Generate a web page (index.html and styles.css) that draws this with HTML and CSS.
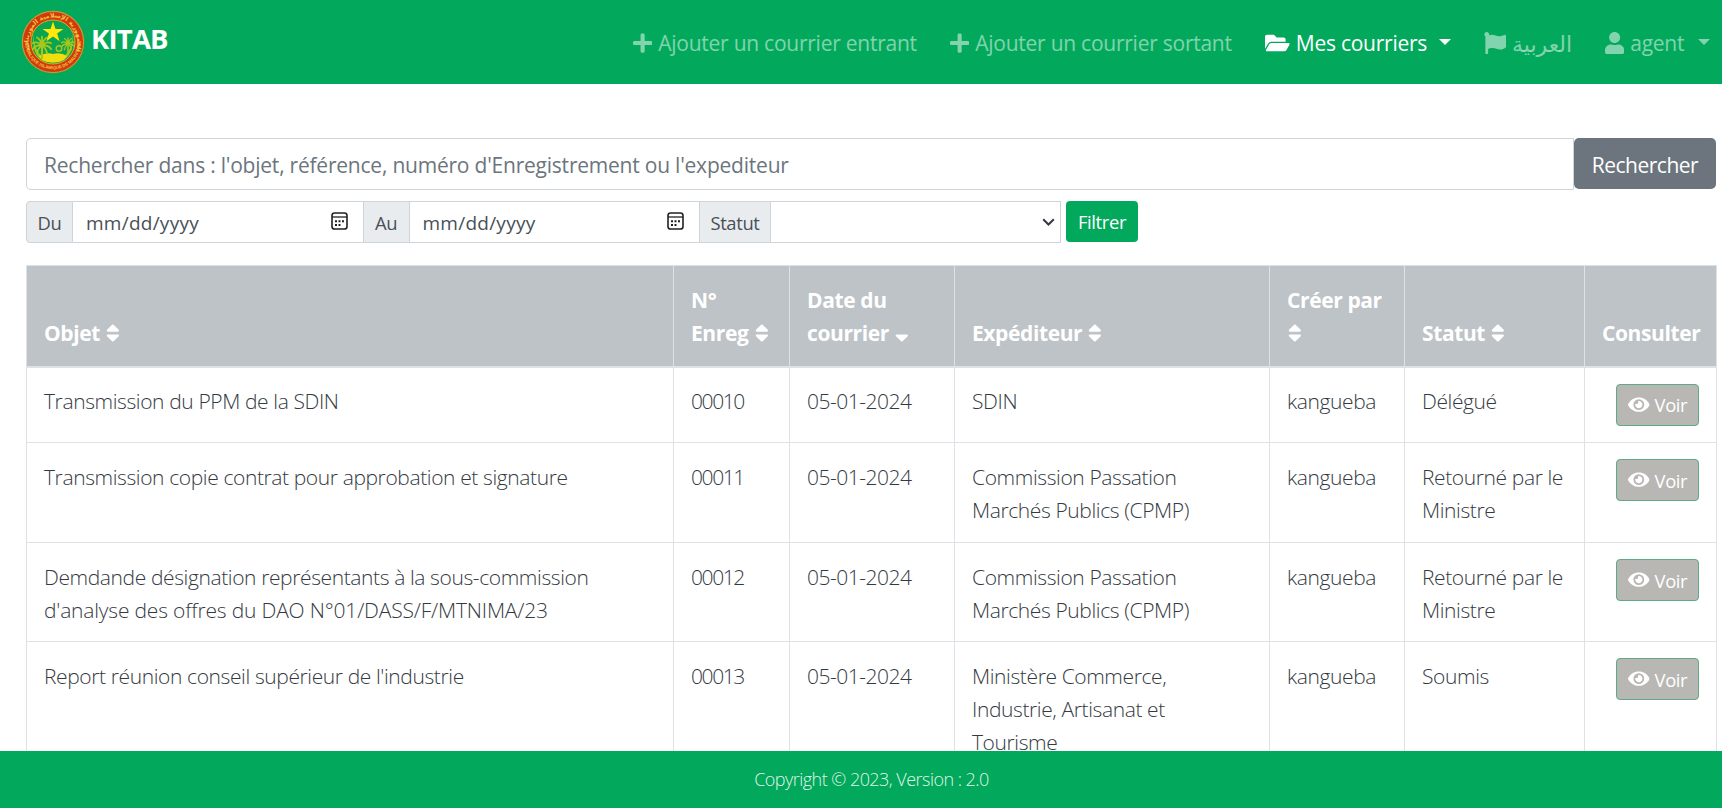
FILE: index.html
```
<!DOCTYPE html>
<html lang="fr">
<head>
<meta charset="utf-8">
<title>KITAB</title>
<link rel="stylesheet" href="styles.css">
</head>
<body>
<svg class="defs" aria-hidden="true">
  <symbol id="plus" viewBox="0 0 448 512"><path d="M416 208H272V64c0-17.67-14.33-32-32-32h-32c-17.67 0-32 14.33-32 32v144H32c-17.67 0-32 14.33-32 32v32c0 17.67 14.33 32 32 32h144v144c0 17.67 14.33 32 32 32h32c17.67 0 32-14.33 32-32V304h144c17.67 0 32-14.33 32-32v-32c0-17.67-14.33-32-32-32z"/></symbol>
  <symbol id="folder" viewBox="0 0 576 512"><path d="M572.694 292.093L500.27 416.248A63.997 63.997 0 0 1 444.989 448H45.025c-18.523 0-30.064-20.093-20.731-36.093l72.424-124.155A64 64 0 0 1 152 256h399.964c18.523 0 30.064 20.093 20.73 36.093zM152 224h328v-48c0-26.51-21.49-48-48-48H272l-64-64H48C21.49 64 0 85.49 0 112v278.046l69.077-118.418C86.214 242.25 117.989 224 152 224z"/></symbol>
  <symbol id="flag" viewBox="0 0 512 512"><path d="M349.565 98.783C295.978 98.783 251.721 64 184.348 64c-24.955 0-47.309 4.384-68.045 12.013a55.947 55.947 0 0 0 3.586-23.562C118.117 24.015 94.806 1.206 66.338.048 34.345-1.254 8 24.296 8 56c0 19.026 9.497 35.825 24 45.945V488c0 13.255 10.745 24 24 24h16c13.255 0 24-10.745 24-24v-94.4c28.311-12.064 63.582-22.122 114.435-22.122 53.588 0 97.844 34.783 165.217 34.783 48.169 0 86.667-16.294 122.505-40.858C506.84 359.452 512 349.571 512 339.045v-243.1c0-23.393-24.269-38.87-45.485-29.016-34.338 15.948-76.454 31.854-116.95 31.854z"/></symbol>
  <symbol id="user" viewBox="0 0 448 512"><path d="M224 256c70.7 0 128-57.3 128-128S294.7 0 224 0 96 57.3 96 128s57.3 128 128 128zm89.6 32h-16.7c-22.2 10.2-46.9 16-72.9 16s-50.6-5.8-72.9-16h-16.7C60.2 288 0 348.2 0 422.4V464c0 26.5 21.5 48 48 48h352c26.5 0 48-21.5 48-48v-41.6c0-74.2-60.2-134.4-134.4-134.4z"/></symbol>
  <symbol id="eye" viewBox="0 0 576 512"><path d="M572.52 241.4C518.29 135.59 410.93 64 288 64S57.68 135.64 3.48 241.41a32.35 32.35 0 0 0 0 29.19C57.71 376.41 165.07 448 288 448s230.32-71.64 284.52-177.41a32.35 32.35 0 0 0 0-29.19zM288 400a144 144 0 1 1 144-144 143.93 143.93 0 0 1-144 144zm0-240a95.31 95.31 0 0 0-25.31 3.79 47.85 47.85 0 0 1-66.9 66.9A95.78 95.78 0 1 0 288 160z"/></symbol>
  <symbol id="sort" viewBox="0 0 320 512"><path d="M41 288h238c21.4 0 32.1 25.9 17 41L177 448c-9.4 9.4-24.6 9.4-33.9 0L24 329c-15.1-15.1-4.4-41 17-41zm255-105L177 64c-9.4-9.4-24.6-9.4-33.9 0L24 183c-15.1 15.1-4.4 41 17 41h238c21.4 0 32.1-25.9 17-41z"/></symbol>
  <symbol id="sort-down" viewBox="0 0 320 512"><path d="M41 288h238c21.4 0 32.1 25.9 17 41L177 448c-9.4 9.4-24.6 9.4-33.9 0L24 329c-15.1-15.1-4.4-41 17-41z"/></symbol>
  <symbol id="calendar" viewBox="0 0 17 18"><rect x="1" y="1" width="15" height="16" rx="2.6" fill="none" stroke="#222" stroke-width="1.6"/><path d="M1 5h15" stroke="#222" stroke-width="1.3"/><path d="M4 8.2h2v2H4zM7.5 8.2h2v2h-2zM11 8.2h2v2h-2zM4 11.9h2v2H4zM7.5 11.9h2v2h-2z" fill="#222"/></symbol>
  <symbol id="palm" viewBox="-12 -12 24 30"><g fill="none" stroke="#a8c71b" stroke-width="2.2" stroke-linecap="round"><path d="M0 0Q-6-5-11-2M0 0Q-8 0-11 5M0 0Q-5 4-6 10M0 0Q6-5 11-2M0 0Q8 0 11 5M0 0Q5 4 6 10M0 0Q-2-7-6-9M0 0Q2-7 6-9M0 0V-10"/><path d="M0 0V16" stroke-width="2.6"/></g></symbol>
</svg>

<header class="navbar">
  <a class="brand">
    <svg class="logo" viewBox="0 0 64 64">
      <defs>
        <path id="arc-top" d="M10.8 44A24.4 24.4 0 1 1 53.2 44"/>
        <path id="arc-bottom" d="M4.200 29A27.900 27.900 0 1 0 59.800 29"/>
      </defs>
      <circle cx="32" cy="32" r="30.6" fill="#d2390f" stroke="#c99a2c" stroke-width="1.2"/>
      <circle cx="32" cy="32" r="22" fill="#0aa552" stroke="#d8b21f" stroke-width="1"/>
      <path d="M12.500 24Q13 49 32 49T51.500 24Q54 52 32 52.500T12.500 24z" fill="#a8c71b"/>
      <path d="M18 46Q25 42 32 44Q40 42 46 46L43 50Q32 55 21 50z" fill="#f3dc0c"/>
      <use href="#palm" x="10" y="25" width="22" height="25"/>
      <use href="#palm" x="40" y="25" width="14" height="21"/>
      <circle cx="38" cy="38.500" r="2.800" fill="none" stroke="#a8c71b" stroke-width="1.500"/>
      <path d="M32 11.500l2.500 7.500h8l-6.400 4.600 2.500 7.700-6.600-4.800-6.600 4.800 2.500-7.700-6.400-4.600h8z" fill="#ffe80a"/>
      <text class="seal-ar"><textPath href="#arc-top" startOffset="50%">الجمهورية الإسلامية الموريتانية</textPath></text>
      <text class="seal-fr"><textPath href="#arc-bottom" startOffset="50%">REPUBLIQUE ISLAMIQUE DE MAURITANIE</textPath></text>
    </svg>
    <span class="brand-name">KITAB</span>
  </a>
  <nav class="menu">
    <a class="item add-in"><svg class="ic w448"><use href="#plus"/></svg><span>Ajouter un courrier entrant</span></a>
    <a class="item add-out"><svg class="ic w448"><use href="#plus"/></svg><span>Ajouter un courrier sortant</span></a>
    <a class="item mails active"><svg class="ic w576"><use href="#folder"/></svg><span>Mes courriers</span><i class="caret"></i></a>
    <a class="item lang"><svg class="ic w512"><use href="#flag"/></svg><span class="ar">العربية</span></a>
    <a class="item account"><svg class="ic w448"><use href="#user"/></svg><span>agent</span><i class="caret"></i></a>
  </nav>
</header>

<main class="content">
  <form class="search">
    <input class="search-input" type="text" placeholder="Rechercher dans : l'objet, référence, numéro d'Enregistrement ou l'expediteur">
    <button class="search-btn" type="button">Rechercher</button>
  </form>

  <form class="filters">
    <span class="addon du">Du</span>
    <span class="date"><span>mm/dd/yyyy</span><svg class="cal"><use href="#calendar"/></svg></span>
    <span class="addon au">Au</span>
    <span class="date"><span>mm/dd/yyyy</span><svg class="cal"><use href="#calendar"/></svg></span>
    <span class="addon st">Statut</span>
    <span class="select"><svg class="chev" viewBox="0 0 13 8"><path d="M1.200 1.200l5.300 5.300 5.300-5.300" fill="none" stroke="#343a40" stroke-width="2"/></svg></span>
    <button class="filter-btn" type="button">Filtrer</button>
  </form>

  <table class="grid">
    <colgroup><col class="c1"><col class="c2"><col class="c3"><col class="c4"><col class="c5"><col class="c6"><col class="c7"></colgroup>
    <thead>
      <tr>
        <th>Objet <svg class="sort"><use href="#sort"/></svg></th>
        <th>N°<br>Enreg <svg class="sort"><use href="#sort"/></svg></th>
        <th>Date du<br>courrier <svg class="sort"><use href="#sort-down"/></svg></th>
        <th>Expéditeur <svg class="sort"><use href="#sort"/></svg></th>
        <th>Créer par<br><svg class="sort"><use href="#sort"/></svg></th>
        <th>Statut <svg class="sort"><use href="#sort"/></svg></th>
        <th>Consulter</th>
      </tr>
    </thead>
    <tbody>
      <tr class="r1">
        <td>Transmission du PPM de la SDIN</td><td class="num">00010</td><td class="day">05-01-2024</td><td>SDIN</td><td>kangueba</td><td>Délégué</td>
        <td class="act"><a class="view"><svg class="eye"><use href="#eye"/></svg>Voir</a></td>
      </tr>
      <tr class="r2">
        <td>Transmission copie contrat pour approbation et signature</td><td class="num">00011</td><td class="day">05-01-2024</td><td>Commission Passation<br>Marchés Publics (CPMP)</td><td>kangueba</td><td>Retourné par le<br>Ministre</td>
        <td class="act"><a class="view"><svg class="eye"><use href="#eye"/></svg>Voir</a></td>
      </tr>
      <tr class="r3">
        <td>Demdande désignation représentants à la sous-commission<br><span class="caps">d'analyse des offres du DAO N°01/DASS/F/MTNIMA/23</span></td><td class="num">00012</td><td class="day">05-01-2024</td><td>Commission Passation<br>Marchés Publics (CPMP)</td><td>kangueba</td><td>Retourné par le<br>Ministre</td>
        <td class="act"><a class="view"><svg class="eye"><use href="#eye"/></svg>Voir</a></td>
      </tr>
      <tr class="r4">
        <td>Report réunion conseil supérieur de l'industrie</td><td class="num">00013</td><td class="day">05-01-2024</td><td>Ministère Commerce,<br>Industrie, Artisanat et<br>Tourisme</td><td>kangueba</td><td>Soumis</td>
        <td class="act"><a class="view"><svg class="eye"><use href="#eye"/></svg>Voir</a></td>
      </tr>
    </tbody>
  </table>
</main>

<footer class="footer">Copyright © 2023, Version : 2.0</footer>
</body>
</html>
```
FILE: styles.css
```
* { box-sizing: border-box; }
body {
  margin: 0;
  height: 808px;
  overflow: hidden;
  display: flex;
  flex-direction: column;
  background: #fff;
  color: #212529;
  font: 300 21px/33px "Open Sans", "Noto Sans", sans-serif;
}
.defs { display: none; }
svg { fill: currentColor; }

/* Top bar */
.navbar {
  flex: 0 0 84px;
  display: flex;
  justify-content: space-between;
  align-items: flex-start;
  background: #02a95c;
  padding: 0 12px 0 21px;
}
.brand { display: flex; color: #fff; padding-top: 10px; }
.logo { width: 64px; height: 64px; flex: none; }
.brand-name {
  margin: 10px 0 0 6px;
  font-weight: 700;
  font-size: 27.5px;
  line-height: 37px;
  letter-spacing: -0.8px;
}
.seal-ar, .seal-fr { fill: #f3c83a; text-anchor: middle; }
.seal-ar { font: 700 6.2px "DejaVu Sans", sans-serif; }
.seal-fr { font: 700 4.3px "Liberation Sans", sans-serif; }
.menu { display: flex; gap: 33px; padding-top: 26px; color: rgba(255, 255, 255, .5); font-weight: 400; letter-spacing: -.25px; }
.item { display: flex; align-items: center; height: 34px; white-space: nowrap; }
.item.active { color: #fff; }
.add-in { width: 284px; }
.add-out { width: 282px; }
.mails { width: 186px; }
.lang { width: 88px; }
.account { width: 105px; }
.ic { height: 22px; margin-right: 6px; flex: none; }
.w448 { width: 19.25px; }
.w512 { width: 22px; }
.w576 { width: 24.75px; }
.ar { font-family: "Noto Sans", "DejaVu Sans", sans-serif; font-size: 22px; letter-spacing: 0; }
.caret { margin: -2px 0 0 auto; border: 6.6px solid transparent; border-top-color: currentColor; border-bottom: 0; }

/* Search and filters */
.content { flex: 1 1 0; min-height: 0; overflow: hidden; padding: 54px 5px 0 26px; }
.search { display: flex; height: 52px; width: 1690px; }
.search-input {
  flex: 1;
  height: 52px;
  border: 1px solid #ced4da;
  border-radius: 5px 0 0 5px;
  padding: 2px 16px 0 17px;
  font: 400 21px/33px "Open Sans", sans-serif;
  letter-spacing: -.22px;
}
.search-input::placeholder { color: #6c757d; opacity: 1; }
.search-btn {
  width: 142px;
  height: 51px;
  padding: 3px 0 0;
  border: 0;
  border-radius: 5px;
  background: #6c757d;
  color: #fff;
  font: 400 21px/33px "Open Sans", sans-serif;
  letter-spacing: -.5px;
}
.filters { display: flex; height: 42px; margin-top: 11px; font-weight: 400; font-size: 18.4px; }
.addon {
  display: flex;
  align-items: center;
  justify-content: center;
  background: #e9ecef;
  border: 1px solid #ced4da;
  color: #495057;
  letter-spacing: -.35px;
}
.du { width: 47px; border-radius: 4px 0 0 4px; }
.au { width: 47px; }
.st { width: 72px; }
.date {
  display: flex;
  align-items: center;
  justify-content: space-between;
  width: 289.5px;
  padding: 2px 15px 0 13px;
  border: 1px solid #ced4da;
  border-width: 1px 0;
  color: #495057;
  font-size: 19px;
  letter-spacing: .25px;
}
.cal { width: 17px; height: 18px; margin-bottom: 4px; }
.select {
  display: flex;
  align-items: center;
  justify-content: flex-end;
  width: 290px;
  padding-right: 5px;
  border: 1px solid #ced4da;
  border-left: 0;
}
.chev { width: 13px; height: 8px; }
.filter-btn {
  width: 72px;
  height: 41px;
  margin-left: 5px;
  padding: 0;
  border: 0;
  border-radius: 4px;
  background: #02a95c;
  color: #fff;
  font: 400 18.4px/28px "Open Sans", sans-serif;
  letter-spacing: -.35px;
}

/* Letters table */
.grid { width: 1690px; margin-top: 22px; border-collapse: collapse; table-layout: fixed; letter-spacing: -.39px; color: #343a3f; }
.c1 { width: 647px; }
.c2 { width: 116px; }
.c3 { width: 165px; }
.c4 { width: 315px; }
.c5 { width: 135px; }
.c6 { width: 180px; }
.c7 { width: 132px; }
.grid th, .grid td { border: 1px solid #dee2e6; padding: 17.5px 16px 0 17px; text-align: left; vertical-align: top; white-space: nowrap; }
.grid th {
  height: 101px;
  padding-bottom: 16px;
  padding-top: 16px;
  vertical-align: bottom;
  background: #bdc3c7;
  color: #fff;
  font-weight: 700;
  border-bottom-width: 2px;
}
.sort { width: 13.75px; height: 22px; margin-left: 1px; vertical-align: -3px; }
.sort:only-child { margin-left: 1px; }
.r1 { height: 76px; }
.r2 { height: 100px; }
.r3 { height: 99px; }
.r4 { height: 133px; }
.num { letter-spacing: -1.4px; }
.day { letter-spacing: -.5px; }
.caps { letter-spacing: -.18px; }
.grid .act { text-align: right; padding-top: 16px; padding-right: 17px; }
.view {
  display: inline-flex;
  align-items: center;
  width: 83px;
  height: 42px;
  padding: 0 0 0 11px;
  border: 1px solid #5cab84;
  border-radius: 4px;
  background: #b8b7b4;
  color: #fff;
  font-weight: 400;
  font-size: 18.4px;
  vertical-align: top;
}
.eye { width: 21.600px; height: 19.250px; margin-right: 5px; }

/* Bottom bar */
.footer {
  flex: 0 0 57px;
  padding-left: 21px;
  background: #02a95c;
  color: rgba(255, 255, 255, .9);
  text-align: center;
  font-size: 18px;
  line-height: 57px;
  letter-spacing: -.53px;
}
```
